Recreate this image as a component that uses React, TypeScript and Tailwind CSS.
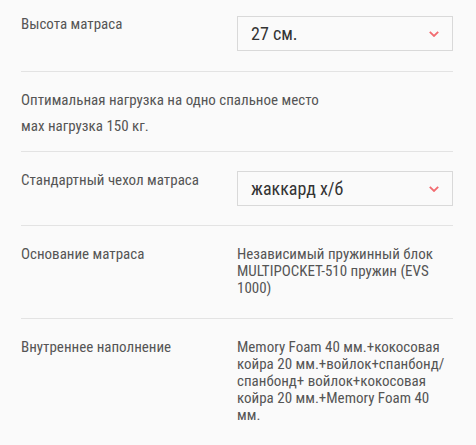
import React from "react";

const font = { fontFamily: '"Roboto Condensed", "Liberation Sans Narrow", Roboto, sans-serif' };

function Chevron() {
  return (
    <svg width="10" height="6" viewBox="0 0 10 6" className="shrink-0">
      <path d="M0.8 0.8 L5 5 L9.2 0.8" fill="none" stroke="#f26b70" strokeWidth="1.8" />
    </svg>
  );
}

function Select({ value }: { value: string }) {
  return (
    <div className="flex h-[35px] w-[216px] items-center justify-between border border-[#d9d9d9] bg-[#fafafa] pl-[13px] pr-[13px]">
      <span className="text-[18px] text-[#333]">{value}</span>
      <Chevron />
    </div>
  );
}

export default function App() {
  return (
    <div style={font} className="min-h-[445px] w-[476px] bg-[#fafafa] pl-[21px] pr-[23px] text-[15px] text-[#555]">
      <div className="flex pt-[14px] pb-[20px]">
        <div className="w-[216px] leading-[20px]">Высота матраса</div>
        <div className="mt-[2px]"><Select value="27 см." /></div>
      </div>
      <div className="border-t border-[#e3e3e3] pt-[15px] pb-[12px] leading-[26px]">
        <div>Оптимальная нагрузка на одно спальное место</div>
        <div>мах нагрузка 150 кг.</div>
      </div>
      <div className="flex border-t border-[#e3e3e3] pt-[18px] pb-[19px]">
        <div className="w-[216px] leading-[20px]">Стандартный чехол матраса</div>
        <div className="mt-[1px]"><Select value="жаккард х/б" /></div>
      </div>
      <div className="flex border-t border-[#e3e3e3] pt-[20px] pb-[21px] leading-[17px]">
        <div className="w-[216px]">Основание матраса</div>
        <div className="w-[216px]">Независимый пружинный блок MULTIPOCKET-510 пружин (EVS 1000)</div>
      </div>
      <div className="flex border-t border-[#e3e3e3] pt-[20px] pb-[21px] leading-[17px]">
        <div className="w-[216px]">Внутреннее наполнение</div>
        <div className="w-[216px]">Memory Foam 40 мм.+кокосовая койра 20 мм.+войлок+спанбонд/ спанбонд+ войлок+кокосовая койра 20 мм.+Memory Foam 40 мм.</div>
      </div>
    </div>
  );
}
